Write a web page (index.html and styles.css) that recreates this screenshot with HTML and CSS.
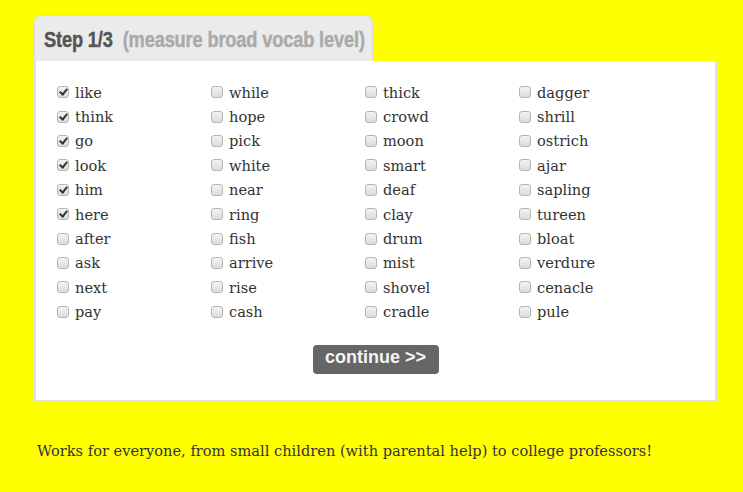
FILE: index.html
```html
<!DOCTYPE html>
<html>
<head>
<meta charset="utf-8">
<link rel="stylesheet" href="styles.css">
</head>
<body>
<div class="wrap">
  <div class="tab"><span class="tab-text"><span class="step">Step 1/3</span><span class="sub">(measure broad vocab level)</span></span></div>
  <div class="box">
    <div class="grid">
      <div class="col">
        <label class="item"><span class="cb on"></span>like</label>
        <label class="item"><span class="cb on"></span>think</label>
        <label class="item"><span class="cb on"></span>go</label>
        <label class="item"><span class="cb on"></span>look</label>
        <label class="item"><span class="cb on"></span>him</label>
        <label class="item"><span class="cb on"></span>here</label>
        <label class="item"><span class="cb"></span>after</label>
        <label class="item"><span class="cb"></span>ask</label>
        <label class="item"><span class="cb"></span>next</label>
        <label class="item"><span class="cb"></span>pay</label>
      </div>
      <div class="col">
        <label class="item"><span class="cb"></span>while</label>
        <label class="item"><span class="cb"></span>hope</label>
        <label class="item"><span class="cb"></span>pick</label>
        <label class="item"><span class="cb"></span>white</label>
        <label class="item"><span class="cb"></span>near</label>
        <label class="item"><span class="cb"></span>ring</label>
        <label class="item"><span class="cb"></span>fish</label>
        <label class="item"><span class="cb"></span>arrive</label>
        <label class="item"><span class="cb"></span>rise</label>
        <label class="item"><span class="cb"></span>cash</label>
      </div>
      <div class="col">
        <label class="item"><span class="cb"></span>thick</label>
        <label class="item"><span class="cb"></span>crowd</label>
        <label class="item"><span class="cb"></span>moon</label>
        <label class="item"><span class="cb"></span>smart</label>
        <label class="item"><span class="cb"></span>deaf</label>
        <label class="item"><span class="cb"></span>clay</label>
        <label class="item"><span class="cb"></span>drum</label>
        <label class="item"><span class="cb"></span>mist</label>
        <label class="item"><span class="cb"></span>shovel</label>
        <label class="item"><span class="cb"></span>cradle</label>
      </div>
      <div class="col">
        <label class="item"><span class="cb"></span>dagger</label>
        <label class="item"><span class="cb"></span>shrill</label>
        <label class="item"><span class="cb"></span>ostrich</label>
        <label class="item"><span class="cb"></span>ajar</label>
        <label class="item"><span class="cb"></span>sapling</label>
        <label class="item"><span class="cb"></span>tureen</label>
        <label class="item"><span class="cb"></span>bloat</label>
        <label class="item"><span class="cb"></span>verdure</label>
        <label class="item"><span class="cb"></span>cenacle</label>
        <label class="item"><span class="cb"></span>pule</label>
      </div>
    </div>
    <div class="actions"><button class="btn">continue &gt;&gt;</button></div>
  </div>
  <p class="note">Works for everyone, from small children (with parental help) to college professors!</p>
</div>
</body>
</html>
```

FILE: styles.css
```css
html, body {
  margin: 0;
  padding: 0;
  background: #ffff00;
}
body {
  font-family: "DejaVu Serif", Georgia, serif;
  color: #333;
}
.wrap {
  padding: 15px 0 0 34px;
  width: 683px;
}
.tab {
  width: 339px;
  height: 46px;
  box-sizing: border-box;
  background: #ebebeb;
  border: 1px solid #dcdcdc;
  border-bottom: none;
  border-radius: 7px 7px 0 0;
  padding: 11px 0 0 9px;
  overflow: hidden;
}
.tab-text {
  display: inline-block;
  font-family: "Liberation Sans", Arial, sans-serif;
  font-weight: bold;
  font-size: 22px;
  line-height: 26px;
  white-space: nowrap;
  transform: scaleX(0.83);
  transform-origin: left center;
  letter-spacing: -0.2px;
  -webkit-text-stroke: 0.4px;
}
.step {
  color: #555;
}
.sub {
  color: #aaa;
  margin-left: 12px;
}
.box {
  background: #fff;
  border: 2px solid #e0e0e0;
  border-top: none;
  height: 341px;
  box-sizing: border-box;
  padding: 19px 0 0 21px;
}
.grid {
  display: grid;
  grid-template-columns: repeat(4, 154px);
}
.col {
  display: flex;
  flex-direction: column;
}
.item {
  display: flex;
  align-items: center;
  height: 24.4px;
  font-size: 14.6px;
  color: #333;
}
.cb {
  width: 12px;
  height: 12px;
  box-sizing: border-box;
  border: 1px solid #b5b5b5;
  border-radius: 3px;
  background: linear-gradient(#f3f3f3, #dcdcdc);
  margin-right: 6px;
  position: relative;
  flex: none;
}
.cb.on::after {
  content: "";
  position: absolute;
  left: 3px;
  top: 0px;
  width: 3px;
  height: 6px;
  border: solid #333;
  border-width: 0 2px 2px 0;
  transform: rotate(40deg);
}
.actions {
  display: flex;
  justify-content: center;
  margin-top: 21px;
  padding-right: 21px;
}
.btn {
  background: #666;
  color: #f4f4f4;
  border: none;
  border-radius: 4px;
  font-family: "Liberation Sans", Arial, sans-serif;
  font-weight: bold;
  font-size: 18px;
  height: 29px;
  width: 126px;
  padding: 0 0 3px 0;
}
.note {
  margin: 40px 0 0 3px;
  font-size: 14.6px;
  color: #333;
}
```
